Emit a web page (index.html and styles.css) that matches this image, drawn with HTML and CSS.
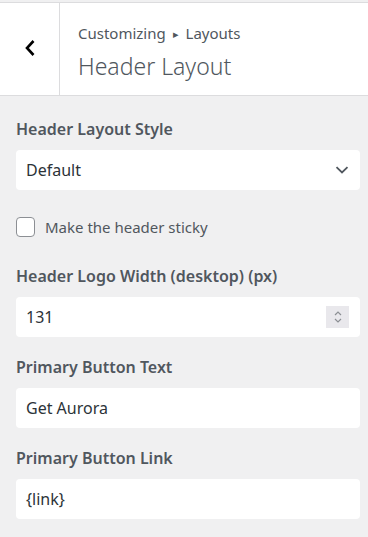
FILE: index.html
```html
<!doctype html>
<html lang="en">
<head>
    <meta charset="UTF-8">
    <title>Header Layout</title>
    <link rel="stylesheet" href="styles.css">
</head>
<body>

<div class="top-strip"></div>

<div class="section-header">
    <a href="#" class="back">
        <svg width="12" height="18" viewBox="0 0 12 18">
            <path d="M9.5 2 L3 9 L9.5 16" fill="none" stroke="#000" stroke-width="2.6"/>
        </svg>
    </a>
    <div class="title-wrap">
        <p class="crumb">Customizing <span class="tri">&#9656;</span> Layouts</p>
        <h2>Header Layout</h2>
    </div>
</div>

<div class="controls">
    <div class="control">
        <label class="label">Header Layout Style</label>
        <div class="field select">
            <span>Default</span>
            <svg width="14" height="8" viewBox="0 0 14 8">
                <path d="M1.5 1.2 L7 6.5 L12.5 1.2" fill="none" stroke="#50575e" stroke-width="1.8"/>
            </svg>
        </div>
    </div>

    <div class="control check-row">
        <span class="checkbox"></span>
        <span class="check-label">Make the header sticky</span>
    </div>

    <div class="control">
        <label class="label">Header Logo Width (desktop) (px)</label>
        <div class="field number">
            <span>131</span>
            <span class="spinner">
                <svg width="10" height="16" viewBox="0 0 10 16">
                    <path d="M2 6 L5 3 L8 6 M2 10 L5 13 L8 10" fill="none" stroke="#8c8f94" stroke-width="1.2"/>
                </svg>
            </span>
        </div>
    </div>

    <div class="control">
        <label class="label">Primary Button Text</label>
        <div class="field"><span>Get Aurora</span></div>
    </div>

    <div class="control">
        <label class="label">Primary Button Link</label>
        <div class="field"><span>{link}</span></div>
    </div>
</div>

</body>
</html>
```

FILE: styles.css
```css
* {
    margin: 0;
    padding: 0;
    box-sizing: border-box;
}
body {
    background: #f0f0f1;
    font-family: "Noto Sans", "Open Sans", sans-serif;
    color: #50575e;
}
a {
    color: black;
    text-decoration: none;
}
.top-strip {
    height: 3px;
    border-bottom: 1px solid #dcdcde;
}
.section-header {
    display: flex;
    height: 93px;
    background: #fff;
    border-bottom: 1px solid #dcdcde;
}
.back {
    width: 60px;
    border-right: 1px solid #dcdcde;
    display: flex;
    align-items: center;
    justify-content: center;
    padding-bottom: 2px;
}
.title-wrap {
    padding: 19px 0 0 18px;
}
.crumb {
    font-size: 15px;
    line-height: 22px;
}
.crumb .tri {
    font-size: 11px;
    margin: 0 3px;
    position: relative;
    top: -1px;
}
.section-header h2 {
    font-size: 23px;
    font-weight: 300;
    line-height: 30px;
    margin-top: 5px;
}
.controls {
    padding: 23px 8px 0 16px;
}
.control {
    margin-bottom: 20px;
}
.label {
    display: block;
    font-size: 16px;
    font-weight: 600;
    line-height: 21px;
    margin-bottom: 10px;
}
.field {
    display: flex;
    align-items: center;
    justify-content: space-between;
    height: 40px;
    background: #fff;
    border-radius: 4px;
    padding: 0 10px 0 10px;
    font-size: 16px;
    color: #2c3338;
}
.select {
    padding-right: 11px;
}
.number {
    padding-right: 11px;
}
.spinner {
    display: flex;
    align-items: center;
    justify-content: center;
    width: 23px;
    height: 22px;
    background: #e9e8ec;
}
.check-row {
    display: flex;
    align-items: center;
    margin: 27px 0 29px;
}
.checkbox {
    width: 19px;
    height: 20px;
    border: 1px solid #8c8f94;
    border-radius: 4px;
    background: #fff;
}
.check-label {
    font-size: 15px;
    margin-left: 10px;
}
```
